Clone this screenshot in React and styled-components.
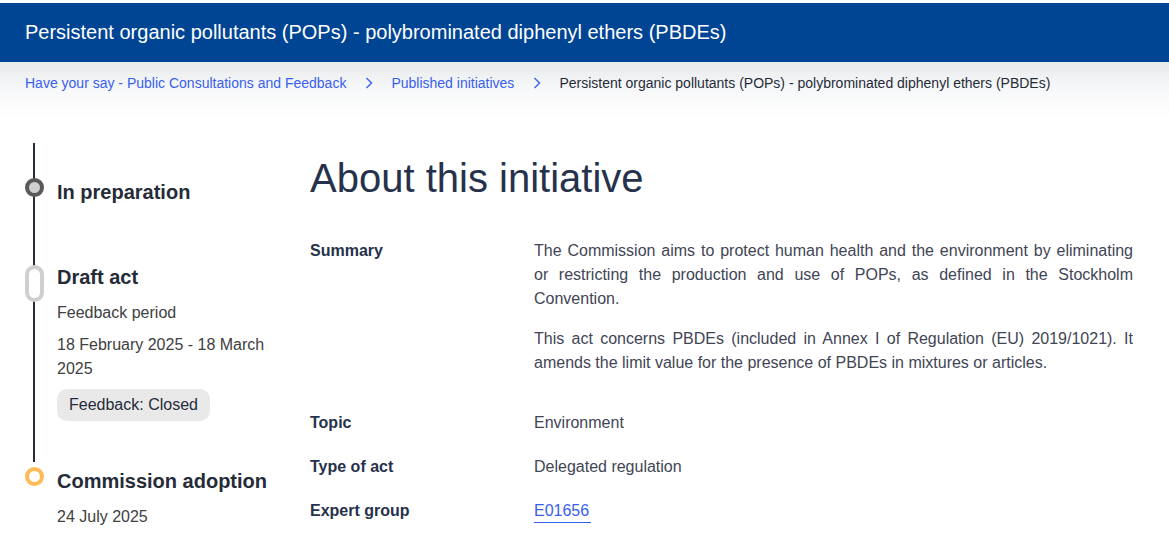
import React from "react";
import styled, { createGlobalStyle } from "styled-components";

const GlobalStyle = createGlobalStyle`
  html, body {
    margin: 0;
    padding: 0;
    background: #ffffff;
  }
  body {
    font-family: "Liberation Sans", Arial, sans-serif;
    color: #404040;
  }
  * { box-sizing: border-box; }
`;

const Page = styled.div`
  width: 1169px;
  height: 544px;
  overflow: hidden;
  padding-top: 3px;
  background: #fff;
`;

const Banner = styled.header`
  height: 59px;
  background: #004494;
  display: flex;
  align-items: center;
  padding: 0 25px;
  color: #ffffff;
  font-size: 20px;
`;

const Crumbs = styled.nav`
  height: 58px;
  display: flex;
  align-items: flex-start;
  padding: 11px 25px 0;
  font-size: 14px;
  line-height: 20px;
  background: linear-gradient(180deg, #e8e9eb 0%, #f7f8f9 45%, #ffffff 100%);
`;

const CrumbLink = styled.a`
  color: #3860ed;
  text-decoration: none;
`;

const CrumbCurrent = styled.span`
  color: #262b38;
`;

const Sep = styled.span`
  display: inline-flex;
  align-items: center;
  height: 20px;
  margin: 0 18px 0 19px;
`;

const Chevron = () => (
  <Sep>
    <svg width="8" height="12" viewBox="0 0 8 12" fill="none">
      <path d="M1.5 1 L6.5 6 L1.5 11" stroke="#3860ed" strokeWidth="1.4" />
    </svg>
  </Sep>
);

const Body = styled.div`
  display: flex;
  padding: 23px 36px 0 25px;
`;

const Timeline = styled.ol`
  position: relative;
  list-style: none;
  margin: 0;
  padding: 0;
  width: 285px;
  flex-shrink: 0;

  &::before {
    content: "";
    position: absolute;
    left: 8px;
    top: 0;
    width: 2px;
    height: 319px;
    background: #262b38;
  }
`;

const Step = styled.li`
  display: flex;
  gap: 13px;
  padding-top: ${(p) => p.$top}px;
`;

const MarkerCol = styled.div`
  width: 19px;
  flex-shrink: 0;
  position: relative;
  z-index: 1;
  display: flex;
  justify-content: center;
`;

const Dot = styled.span`
  display: block;
  width: 19px;
  height: ${(p) => (p.$pill ? 37 : 19)}px;
  margin-top: ${(p) => (p.$pill ? 2 : 0)}px;
  border-radius: 10px;
  border: 4px solid ${(p) => p.$ring};
  background: ${(p) => p.$fill};
`;

const StepBody = styled.div`
  display: flex;
  flex-direction: column;
`;

const StepTitle = styled.h3`
  margin: 0;
  font-size: 20px;
  line-height: 28px;
  font-weight: 700;
  color: #262b38;
`;

const StepText = styled.p`
  margin: ${(p) => p.$gap || 10}px 0 0;
  font-size: 16px;
  line-height: 24px;
  color: #404040;
  width: 215px;
`;

const Badge = styled.span`
  align-self: flex-start;
  margin-top: 8px;
  padding: 0 12px;
  height: 32px;
  display: inline-flex;
  align-items: center;
  border-radius: 10px;
  background: #e9e9ea;
  color: #262b38;
  font-size: 16px;
`;

const Main = styled.main`
  flex: 1;
  padding-top: 11px;
`;

const Title = styled.h1`
  margin: 0;
  font-size: 40px;
  line-height: 48px;
  font-weight: 400;
  color: #26324b;
`;

const Facts = styled.dl`
  display: grid;
  grid-template-columns: 224px 1fr;
  margin: 37px 0 0;
  row-gap: 20px;
  font-size: 16px;
  line-height: 24px;
`;

const Term = styled.dt`
  font-weight: 700;
  color: #26324b;
`;

const Value = styled.dd`
  margin: 0;
  color: #3f4555;
  text-align: justify;
`;

const Para = styled.p`
  margin: 0 0 16px;
`;

const Ref = styled.a`
  color: #3860ed;
  text-decoration: none;
  border-bottom: 1px solid #3860ed;
  padding-bottom: 3px;
  padding-right: 2px;
`;

const steps = [
  {
    top: 35,
    title: "In preparation",
    ring: "#595959",
    fill: "#cfcfcf",
  },
  {
    top: 57,
    title: "Draft act",
    ring: "#cfcfcf",
    fill: "#ffffff",
    pill: true,
    lines: ["Feedback period", "18 February 2025 - 18 March 2025"],
    badge: "Feedback: Closed",
  },
  {
    top: 46,
    title: "Commission adoption",
    ring: "#ffbb55",
    fill: "#ffffff",
    lines: ["24 July 2025"],
  },
];

export default function App() {
  return (
    <Page>
      <GlobalStyle />
      <Banner>
        Persistent organic pollutants (POPs) - polybrominated diphenyl ethers (PBDEs)
      </Banner>
      <Crumbs>
        <CrumbLink href="#">Have your say - Public Consultations and Feedback</CrumbLink>
        <Chevron />
        <CrumbLink href="#">Published initiatives</CrumbLink>
        <Chevron />
        <CrumbCurrent>
          Persistent organic pollutants (POPs) - polybrominated diphenyl ethers (PBDEs)
        </CrumbCurrent>
      </Crumbs>
      <Body>
        <Timeline>
          {steps.map((s) => (
            <Step key={s.title} $top={s.top}>
              <MarkerCol>
                <Dot $ring={s.ring} $fill={s.fill} $pill={s.pill} />
              </MarkerCol>
              <StepBody>
                <StepTitle>{s.title}</StepTitle>
                {(s.lines || []).map((l, i) => (
                  <StepText key={l} $gap={i === 0 ? 10 : 8}>
                    {l}
                  </StepText>
                ))}
                {s.badge && <Badge>{s.badge}</Badge>}
              </StepBody>
            </Step>
          ))}
        </Timeline>
        <Main>
          <Title>About this initiative</Title>
          <Facts>
            <Term>Summary</Term>
            <Value>
              <Para>
                The Commission aims to protect human health and the environment by
                eliminating or restricting the production and use of POPs, as defined in
                the Stockholm Convention.
              </Para>
              <Para>
                This act concerns PBDEs (included in Annex I of Regulation (EU)
                2019/1021). It amends the limit value for the presence of PBDEs in
                mixtures or articles.
              </Para>
            </Value>
            <Term>Topic</Term>
            <Value>Environment</Value>
            <Term>Type of act</Term>
            <Value>Delegated regulation</Value>
            <Term>Expert group</Term>
            <Value>
              <Ref href="#">E01656</Ref>
            </Value>
          </Facts>
        </Main>
      </Body>
    </Page>
  );
}
